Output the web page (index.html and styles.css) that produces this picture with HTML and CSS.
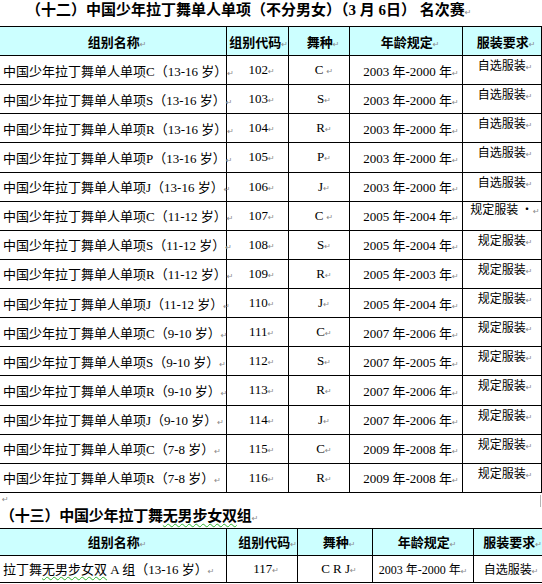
FILE: index.html
```html
<!DOCTYPE html>
<html lang="zh-CN">
<head>
<meta charset="utf-8">
<title>名次赛</title>
<link rel="stylesheet" href="styles.css">
</head>
<body>
<div class="page">
  <h1 class="title1">（十二）中国少年拉丁舞单人单项（不分男女）（3 月 6日） 名次赛<span class="pm">↵</span></h1>
  <table class="t1">
    <colgroup><col class="c1"><col class="c2"><col class="c3"><col class="c4"><col class="c5"></colgroup>
    <thead>
      <tr><th>组别名称<span class="pm">↵</span></th><th class="h-code">组别代码<span class="pm">↵</span></th><th>舞种<span class="pm">↵</span></th><th>年龄规定<span class="pm">↵</span></th><th>服装要求<span class="pm">↵</span></th></tr>
    </thead>
    <tbody>
      <tr><td class="name">中国少年拉丁舞单人单项C（13-16 岁）<span class="pm">↵</span></td><td class="code">102<span class="pm">↵</span></td><td class="dance">C <span class="pm">↵</span></td><td class="age">2003 年-2000 年<span class="pm">↵</span></td><td class="dress">自选服装<span class="pm">↵</span></td></tr>
      <tr><td class="name">中国少年拉丁舞单人单项S（13-16 岁）<span class="pm">↵</span></td><td class="code">103<span class="pm">↵</span></td><td class="dance">S<span class="pm">↵</span></td><td class="age">2003 年-2000 年<span class="pm">↵</span></td><td class="dress">自选服装<span class="pm">↵</span></td></tr>
      <tr><td class="name">中国少年拉丁舞单人单项R（13-16 岁）<span class="pm">↵</span></td><td class="code">104<span class="pm">↵</span></td><td class="dance">R<span class="pm">↵</span></td><td class="age">2003 年-2000 年<span class="pm">↵</span></td><td class="dress">自选服装<span class="pm">↵</span></td></tr>
      <tr><td class="name">中国少年拉丁舞单人单项P（13-16 岁）<span class="pm">↵</span></td><td class="code">105<span class="pm">↵</span></td><td class="dance">P<span class="pm">↵</span></td><td class="age">2003 年-2000 年<span class="pm">↵</span></td><td class="dress">自选服装<span class="pm">↵</span></td></tr>
      <tr><td class="name">中国少年拉丁舞单人单项J（13-16 岁）<span class="pm">↵</span></td><td class="code">106<span class="pm">↵</span></td><td class="dance">J<span class="pm">↵</span></td><td class="age">2003 年-2000 年<span class="pm">↵</span></td><td class="dress">自选服装<span class="pm">↵</span></td></tr>
      <tr><td class="name">中国少年拉丁舞单人单项C（11-12 岁）<span class="pm">↵</span></td><td class="code">107<span class="pm">↵</span></td><td class="dance">C <span class="pm">↵</span></td><td class="age">2005 年-2004 年<span class="pm">↵</span></td><td class="dress dress-hi">规定服装 ·<span class="pm">↵</span></td></tr>
      <tr><td class="name">中国少年拉丁舞单人单项S（11-12 岁）<span class="pm">↵</span></td><td class="code">108<span class="pm">↵</span></td><td class="dance">S<span class="pm">↵</span></td><td class="age">2005 年-2004 年<span class="pm">↵</span></td><td class="dress">规定服装<span class="pm">↵</span></td></tr>
      <tr><td class="name">中国少年拉丁舞单人单项R（11-12 岁）<span class="pm">↵</span></td><td class="code">109<span class="pm">↵</span></td><td class="dance">R<span class="pm">↵</span></td><td class="age">2005 年-2003 年<span class="pm">↵</span></td><td class="dress">规定服装<span class="pm">↵</span></td></tr>
      <tr><td class="name">中国少年拉丁舞单人单项J（11-12 岁）<span class="pm">↵</span></td><td class="code">110<span class="pm">↵</span></td><td class="dance">J<span class="pm">↵</span></td><td class="age">2005 年-2004 年<span class="pm">↵</span></td><td class="dress">规定服装<span class="pm">↵</span></td></tr>
      <tr><td class="name">中国少年拉丁舞单人单项C（9-10 岁）<span class="pm">↵</span></td><td class="code">111<span class="pm">↵</span></td><td class="dance">C<span class="pm">↵</span></td><td class="age">2007 年-2006 年<span class="pm">↵</span></td><td class="dress">规定服装<span class="pm">↵</span></td></tr>
      <tr><td class="name">中国少年拉丁舞单人单项S（9-10 岁）<span class="pm">↵</span></td><td class="code">112<span class="pm">↵</span></td><td class="dance">S<span class="pm">↵</span></td><td class="age">2007 年-2005 年<span class="pm">↵</span></td><td class="dress">规定服装<span class="pm">↵</span></td></tr>
      <tr><td class="name">中国少年拉丁舞单人单项R（9-10 岁）<span class="pm">↵</span></td><td class="code">113<span class="pm">↵</span></td><td class="dance">R<span class="pm">↵</span></td><td class="age">2007 年-2006 年<span class="pm">↵</span></td><td class="dress">规定服装<span class="pm">↵</span></td></tr>
      <tr><td class="name">中国少年拉丁舞单人单项J（9-10 岁）<span class="pm">↵</span></td><td class="code">114<span class="pm">↵</span></td><td class="dance">J<span class="pm">↵</span></td><td class="age">2007 年-2006 年<span class="pm">↵</span></td><td class="dress">规定服装<span class="pm">↵</span></td></tr>
      <tr><td class="name">中国少年拉丁舞单人单项C（7-8 岁）<span class="pm">↵</span></td><td class="code">115<span class="pm">↵</span></td><td class="dance">C<span class="pm">↵</span></td><td class="age">2009 年-2008 年<span class="pm">↵</span></td><td class="dress">规定服装<span class="pm">↵</span></td></tr>
      <tr><td class="name">中国少年拉丁舞单人单项R（7-8 岁）<span class="pm">↵</span></td><td class="code">116<span class="pm">↵</span></td><td class="dance">R<span class="pm">↵</span></td><td class="age">2009 年-2008 年<span class="pm">↵</span></td><td class="dress">规定服装<span class="pm">↵</span></td></tr>
    </tbody>
  </table>
  <div class="gap"><span class="pm">↵</span><span class="tick"></span></div>
  <h2 class="title2">（十三）中国少年拉丁舞<span class="spell">无男步女双</span>组<span class="pm">↵</span></h2>
  <table class="t2">
    <colgroup><col class="c1"><col class="c2"><col class="c3"><col class="c4"><col class="c5"></colgroup>
    <thead>
      <tr><th>组别名称<span class="pm">↵</span></th><th class="h-code">组别代码<span class="pm">↵</span></th><th>舞种<span class="pm">↵</span></th><th>年龄规定<span class="pm">↵</span></th><th class="h-dress">服装要求<span class="pm">↵</span></th></tr>
    </thead>
    <tbody>
      <tr><td class="name">拉丁舞<span class="spell">无男步女双</span> A 组（13-16 岁）<span class="pm">↵</span></td><td class="code">117<span class="pm">↵</span></td><td class="dance">C R J<span class="pm">↵</span></td><td class="age">2003 年-2000 年<span class="pm">↵</span></td><td class="dress">自选服装<span class="pm">↵</span></td></tr>
    </tbody>
  </table>
</div>
</body>
</html>
```

FILE: styles.css
```css
* { box-sizing: border-box; }

html, body {
  margin: 0;
  padding: 0;
  background: #ffffff;
}

body {
  color: #000000;
  font-family: "Liberation Serif", "Noto Sans CJK SC", serif;
  font-size: 13px;
}

.page {
  width: 542px;
  height: 584px;
  overflow: hidden;
}

.pm {
  font-family: "DejaVu Sans", sans-serif;
  font-size: 8px;
  font-weight: 400;
  color: #8a8a8a;
}

.title1 {
  margin: 0;
  height: 26px;
  padding-left: 26px;
  font-size: 15px;
  line-height: 20px;
  font-weight: 700;
  white-space: nowrap;
}

.title2 {
  margin: 0;
  height: 24px;
  font-size: 15px;
  line-height: 25px;
  font-weight: 700;
  white-space: nowrap;
  letter-spacing: -0.2px;
}

.spell {
  text-decoration: underline wavy #2fb52f;
  text-decoration-thickness: 1px;
  text-underline-offset: 2px;
}

table {
  border-collapse: collapse;
  table-layout: fixed;
  margin-left: -1px;
}

th, td {
  border: 1px solid #000000;
  padding: 0;
  white-space: nowrap;
  vertical-align: middle;
}

th {
  background: #ccffff;
  font-family: "Liberation Serif", "Noto Sans CJK SC", serif;
  font-size: 13px;
  font-weight: 700;
  text-align: center;
  padding-left: 8px;
}
th.h-code { padding-left: 0; text-align: right; }
th.h-dress { padding-left: 0; text-align: right; }

td { font-size: 13px; }

td.name { text-align: left; padding-left: 3px; }
td.code { text-align: center; padding-left: 8px; }
td.dance { text-align: center; padding-left: 10px; }
td.age { text-align: center; padding-left: 10px; }
td.dress {
  font-family: "Noto Sans CJK SC", sans-serif;
  font-size: 12px;
  text-align: center;
  padding-left: 6px;
}

/* table 1 */
.t1 { width: 542px; }
.t1 .c1 { width: 227px; }
.t1 .c2 { width: 62px; }
.t1 .c3 { width: 61px; }
.t1 .c4 { width: 113px; }
.t1 .c5 { width: 79px; }
.t1 thead tr { height: 29px; }
.t1 tbody tr { height: 29.13px; }
.t1 td.dress {
  vertical-align: top;
  line-height: 14px;
  padding-top: 2px;
}
.t1 td.dress-hi { padding-top: 0; }

.gap {
  height: 11px;
  display: flex;
  justify-content: space-between;
  align-items: flex-start;
  padding-left: 2px;
  line-height: 11px;
}
.gap .pm { margin-top: 1px; }
.gap .tick {
  width: 1px;
  height: 12px;
  margin-top: 2px;
  margin-right: 1px;
  background: #b4b4b4;
}

/* table 2 */
.t2 { width: 543px; }
.t2 .c1 { width: 227px; }
.t2 .c2 { width: 71px; }
.t2 .c3 { width: 75px; }
.t2 .c4 { width: 101px; }
.t2 .c5 { width: 69px; }
.t2 tr { height: 27px; }
.t2 td.dance { padding-left: 8px; }
.t2 td.age { font-size: 12px; padding-left: 0; }
```
